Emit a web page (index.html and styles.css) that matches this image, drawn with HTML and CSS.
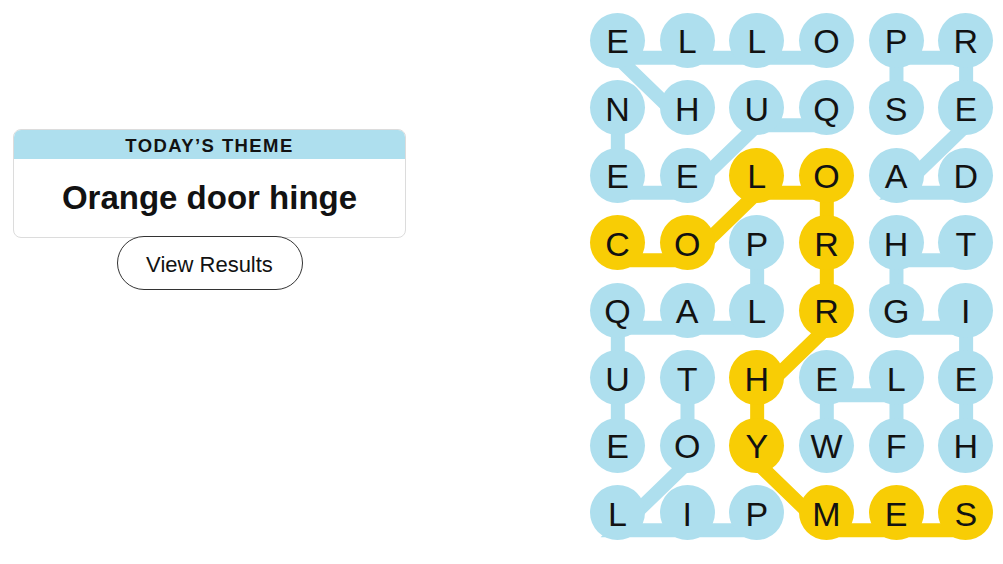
FILE: index.html
```html
<!DOCTYPE html>
<html lang="en">
<head>
<meta charset="utf-8">
<title>Strands</title>
<link rel="stylesheet" href="styles.css">
</head>
<body>
<div class="page">
  <section class="left">
    <div class="card">
      <div class="card-head">TODAY’S THEME</div>
      <div class="card-body">Orange door hinge</div>
    </div>
    <button class="btn">View Results</button>
  </section>
  <section class="board">
    <svg class="lines" viewBox="0 0 418 540" width="418" height="540">
      <g fill="none" stroke="#aedfee" stroke-width="14" stroke-linejoin="miter">
        <polyline points="104.49,119.25 34.83,51.75 104.49,51.75 174.15,51.75 243.81,51.75"/>
        <polyline points="243.81,119.25 174.15,119.25 104.49,186.75 34.83,186.75 34.83,119.25"/>
        <polyline points="313.47,119.25 313.47,51.75 383.13,51.75 383.13,119.25 313.47,186.75 383.13,186.75"/>
        <polyline points="383.13,456.75 383.13,389.25 383.13,321.75 313.47,321.75 313.47,254.25 383.13,254.25"/>
        <polyline points="174.15,254.25 174.15,321.75 104.49,321.75 34.83,321.75 34.83,389.25 34.83,456.75"/>
        <polyline points="174.15,524.25 104.49,524.25 34.83,524.25 104.49,456.75 104.49,389.25"/>
        <polyline points="313.47,456.75 313.47,389.25 243.81,389.25 243.81,456.75"/>
      </g>
      <polyline fill="none" stroke="#f8cd05" stroke-width="14" stroke-linejoin="miter" points="34.83,254.25 104.49,254.25 174.15,186.75 243.81,186.75 243.81,254.25 243.81,321.75 174.15,389.25 174.15,456.75 243.81,524.25 313.47,524.25 383.13,524.25"/>
    </svg>
    <div class="cell"><span class="dot">E</span></div>
    <div class="cell"><span class="dot">L</span></div>
    <div class="cell"><span class="dot">L</span></div>
    <div class="cell"><span class="dot">O</span></div>
    <div class="cell"><span class="dot">P</span></div>
    <div class="cell"><span class="dot">R</span></div>

    <div class="cell"><span class="dot">N</span></div>
    <div class="cell"><span class="dot">H</span></div>
    <div class="cell"><span class="dot">U</span></div>
    <div class="cell"><span class="dot">Q</span></div>
    <div class="cell"><span class="dot">S</span></div>
    <div class="cell"><span class="dot">E</span></div>

    <div class="cell"><span class="dot">E</span></div>
    <div class="cell"><span class="dot">E</span></div>
    <div class="cell"><span class="dot span">L</span></div>
    <div class="cell"><span class="dot span">O</span></div>
    <div class="cell"><span class="dot">A</span></div>
    <div class="cell"><span class="dot">D</span></div>

    <div class="cell"><span class="dot span">C</span></div>
    <div class="cell"><span class="dot span">O</span></div>
    <div class="cell"><span class="dot">P</span></div>
    <div class="cell"><span class="dot span">R</span></div>
    <div class="cell"><span class="dot">H</span></div>
    <div class="cell"><span class="dot">T</span></div>

    <div class="cell"><span class="dot">Q</span></div>
    <div class="cell"><span class="dot">A</span></div>
    <div class="cell"><span class="dot">L</span></div>
    <div class="cell"><span class="dot span">R</span></div>
    <div class="cell"><span class="dot">G</span></div>
    <div class="cell"><span class="dot">I</span></div>

    <div class="cell"><span class="dot">U</span></div>
    <div class="cell"><span class="dot">T</span></div>
    <div class="cell"><span class="dot span">H</span></div>
    <div class="cell"><span class="dot">E</span></div>
    <div class="cell"><span class="dot">L</span></div>
    <div class="cell"><span class="dot">E</span></div>

    <div class="cell"><span class="dot">E</span></div>
    <div class="cell"><span class="dot">O</span></div>
    <div class="cell"><span class="dot span">Y</span></div>
    <div class="cell"><span class="dot">W</span></div>
    <div class="cell"><span class="dot">F</span></div>
    <div class="cell"><span class="dot">H</span></div>

    <div class="cell"><span class="dot">L</span></div>
    <div class="cell"><span class="dot">I</span></div>
    <div class="cell"><span class="dot">P</span></div>
    <div class="cell"><span class="dot span">M</span></div>
    <div class="cell"><span class="dot span">E</span></div>
    <div class="cell"><span class="dot span">S</span></div>
  </section>
</div>
</body>
</html>
```

FILE: styles.css
```css
html, body {
  margin: 0;
  padding: 0;
  background: #ffffff;
  color: #121212;
  font-family: "Liberation Sans", Arial, sans-serif;
}

.page {
  display: flex;
  align-items: flex-start;
  padding: 6.25px 0 0 13px;
}

.left {
  width: 393px;
  margin-top: 122.75px;
  display: flex;
  flex-direction: column;
  align-items: center;
}

.card {
  width: 100%;
  box-sizing: border-box;
  border: 1px solid #dcdcdc;
  border-radius: 8px;
  overflow: hidden;
  background: #ffffff;
}

.card-head {
  margin: -1px -1px 0;
  height: 30px;
  box-sizing: border-box;
  padding-top: 3px;
  background: #aedfee;
  display: flex;
  align-items: center;
  justify-content: center;
  font-weight: 700;
  font-size: 18.5px;
  letter-spacing: 1.4px;
  color: #121212;
}

.card-body {
  height: 78px;
  display: flex;
  align-items: center;
  justify-content: center;
  font-weight: 700;
  font-size: 33px;
  color: #121212;
}

.btn {
  margin-top: -2px;
  width: 186px;
  height: 54px;
  box-sizing: border-box;
  border: 1px solid #333333;
  border-radius: 27px;
  background: #ffffff;
  font-family: "Liberation Sans", Arial, sans-serif;
  font-size: 22px;
  color: #121212;
  padding: 3px 0 0;
}

.board {
  position: relative;
  margin-left: 176.7px;
  width: 418px;
  display: grid;
  grid-template-columns: repeat(6, 69.66px);
  grid-template-rows: repeat(8, 67.5px);
}

.lines {
  position: absolute;
  left: 0;
  top: 0;
  z-index: 0;
  overflow: visible;
}

.cell {
  position: relative;
  z-index: 1;
  display: flex;
  align-items: center;
  justify-content: center;
}

.dot {
  width: 55px;
  height: 55px;
  border-radius: 50%;
  background: #aedfee;
  display: flex;
  align-items: center;
  justify-content: center;
  box-sizing: border-box;
  padding-top: 2px;
  font-size: 34px;
  line-height: 1;
  color: #121212;
}

.dot.span {
  background: #f8cd05;
}
```
